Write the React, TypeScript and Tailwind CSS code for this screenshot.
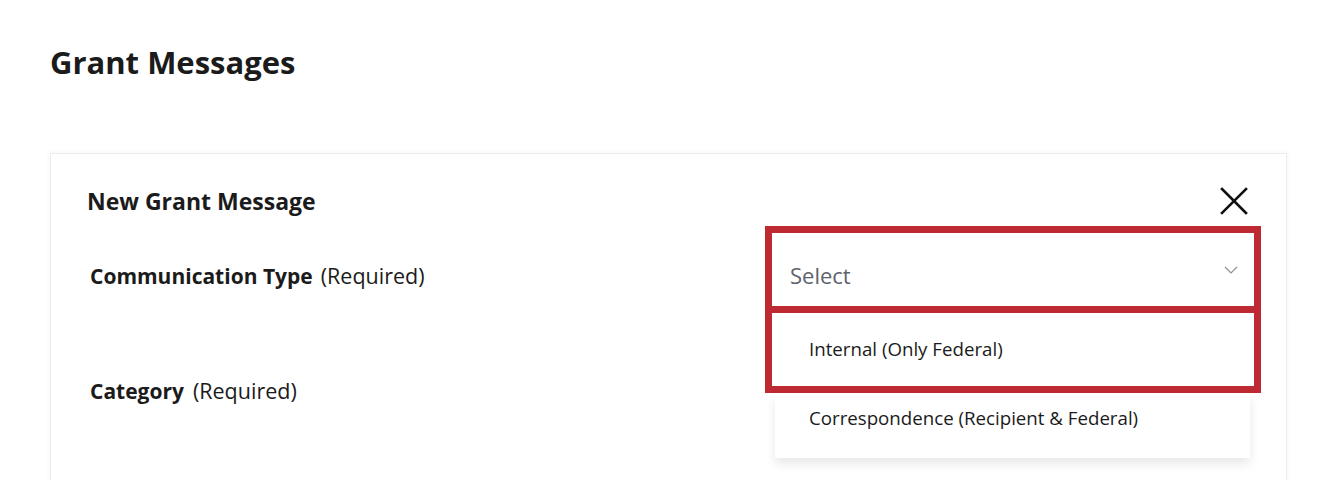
const font = { fontFamily: '"Open Sans", "Noto Sans", sans-serif' };

const CloseIcon = () => (
    <svg width="28" height="28" viewBox="0 0 28 28" fill="none" stroke="#111" strokeWidth="2.6" strokeLinecap="square">
        <path d="M2 2 L26 26 M26 2 L2 26" />
    </svg>
);

const Chevron = () => (
    <svg width="14" height="8" viewBox="0 0 14 8" fill="none" stroke="#8a8f96" strokeWidth="1.2">
        <path d="M1 1 L7 7 L13 1" />
    </svg>
);

const App = () => {
    return (
        <div className="min-h-[480px] bg-white px-[50px] pt-[42px] text-[#1b1b1b]" style={font}>
            <h1 className="text-[31px] font-bold leading-[40px] mb-[71px]">Grant Messages</h1>

            <div className="w-[1237px] border border-[#ececec] bg-white shadow-[0_0_6px_rgba(0,0,0,0.05)] pt-[31px] pl-[36px] pr-[25px] pb-[40px]">
                <div className="flex items-center justify-between mr-[13px]">
                    <h2 className="text-[23px] font-bold leading-[32px]">New Grant Message</h2>
                    <CloseIcon />
                </div>

                <div className="flex mt-[9px]">
                    <div className="w-[678px] shrink-0 pl-[3px] flex flex-col">
                        <div className="mt-[36px] text-[21px] leading-[28px]">
                            <span className="font-bold">Communication Type</span>
                            <span className="ml-[8px] text-[21.5px]">(Required)</span>
                        </div>
                        <div className="mt-[87px] text-[21px] leading-[28px]">
                            <span className="font-bold">Category</span>
                            <span className="ml-[9px] text-[21.5px]">(Required)</span>
                        </div>
                    </div>

                    <div className="w-[496px] shrink-0">
                        <div className="border-[7px] border-[#be2a32] bg-white">
                            <div className="h-[73px] flex items-center justify-between pl-[18px] pr-[16px]">
                                <span className="mt-[11px] text-[22px] leading-[28px] text-[#5d636c]">Select</span>
                                <Chevron />
                            </div>
                            <div className="h-[7px] bg-[#be2a32]" />
                            <div className="h-[73px] flex items-center pl-[37px] text-[18.7px]">
                                Internal (Only Federal)
                            </div>
                        </div>
                        <div className="ml-[10px] mr-[11px] bg-white shadow-[0_6px_10px_rgba(0,0,0,0.09)] pl-[34px] pt-[13px] pb-[28px] text-[18.7px] leading-[24px]">
                            Correspondence (Recipient &amp; Federal)
                        </div>
                    </div>
                </div>
            </div>
        </div>
    );
};

export default App;
